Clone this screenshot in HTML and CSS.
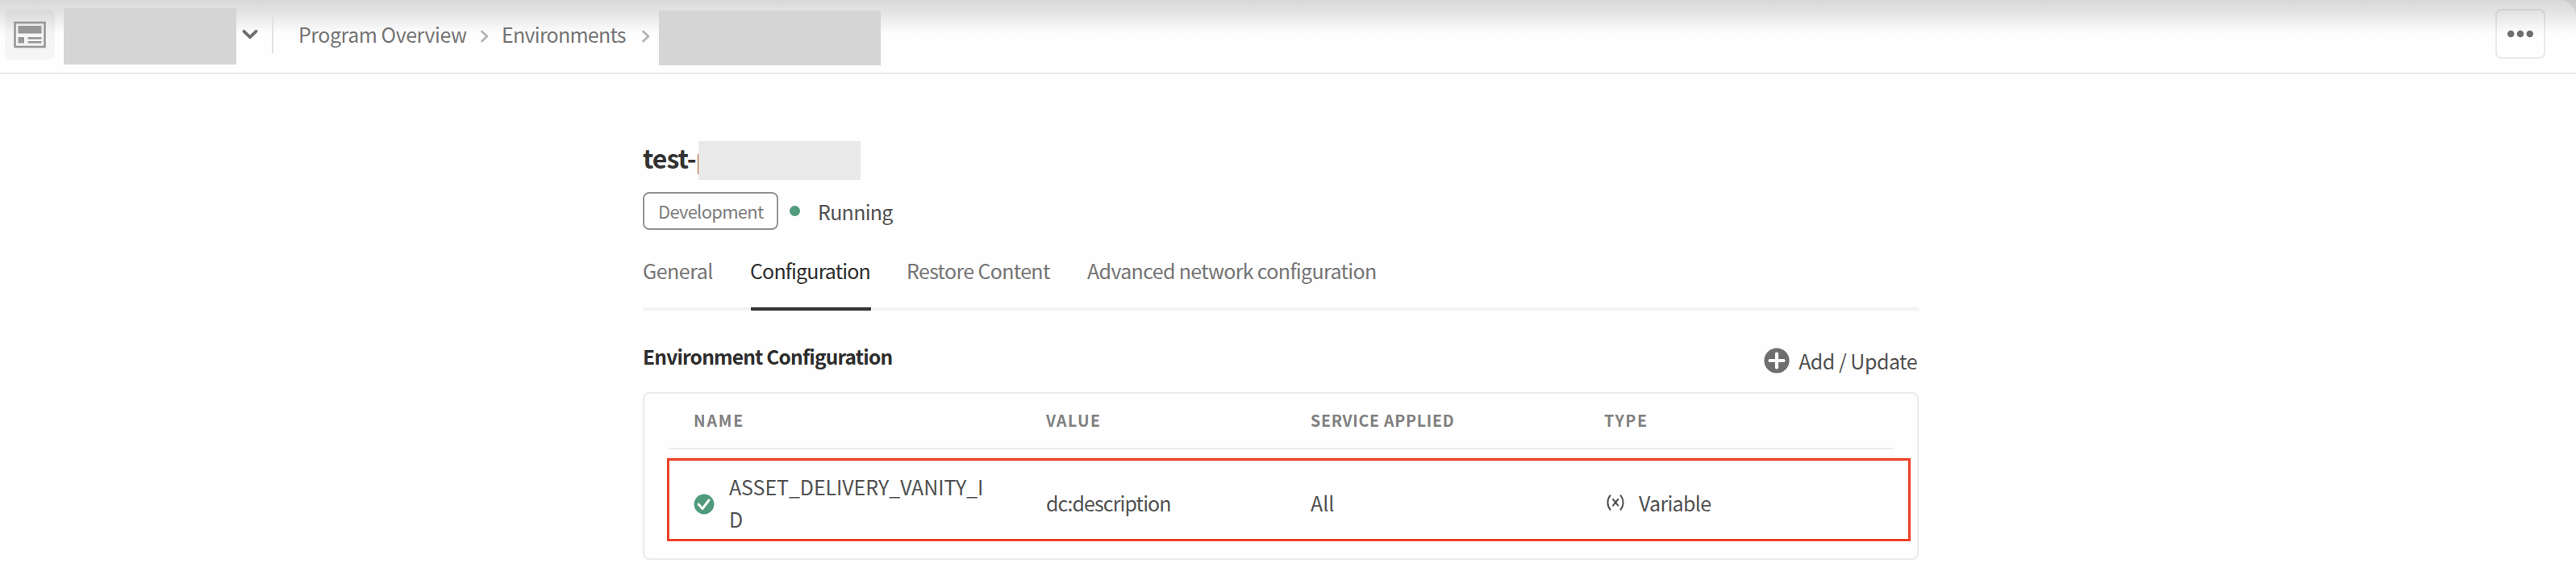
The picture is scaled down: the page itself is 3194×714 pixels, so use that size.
FILE: index.html
```
<!DOCTYPE html>
<html lang="en">
<head>
<meta charset="utf-8">
<title>Environment Configuration</title>
<link rel="stylesheet" href="styles.css">
</head>
<body>
<header class="topbar">
  <div class="app-tile">
    <svg width="40" height="34" viewBox="0 0 40 34">
      <rect x="1.5" y="2" width="37" height="30" fill="none" stroke="#979797" stroke-width="2.6"/>
      <rect x="5.5" y="6" width="29" height="9.5" fill="#979797"/>
      <rect x="5.5" y="20" width="7.5" height="7.5" fill="#979797"/>
      <rect x="17.5" y="20" width="17" height="2.6" fill="#979797"/>
      <rect x="17.5" y="25" width="17" height="2.6" fill="#979797"/>
    </svg>
  </div>
  <div class="mask mask-program"></div>
  <svg class="chevron-down" width="20" height="14" viewBox="0 0 20 14"><path d="M2.5 2.8 L10 10.2 L17.5 2.8" fill="none" stroke="#6e6e6e" stroke-width="3.8" stroke-linecap="round" stroke-linejoin="round"/></svg>
  <div class="divider"></div>
  <nav class="crumbs">
    <a class="crumb crumb-program">Program Overview</a>
    <svg class="sep sep-first" width="12" height="18" viewBox="0 0 12 18"><path d="M3.5 3 L10 9 L3.5 15" fill="none" stroke="#b4b4b4" stroke-width="2.8" stroke-linecap="round" stroke-linejoin="round"/></svg>
    <a class="crumb crumb-env">Environments</a>
    <svg class="sep" width="12" height="18" viewBox="0 0 12 18"><path d="M3.5 3 L10 9 L3.5 15" fill="none" stroke="#b4b4b4" stroke-width="2.8" stroke-linecap="round" stroke-linejoin="round"/></svg>
  </nav>
  <div class="mask mask-env"></div>
  <button class="more" aria-label="More">
    <svg width="34" height="10" viewBox="0 0 34 10" fill="#6e6e6e"><circle cx="5.2" cy="5" r="4.3"/><circle cx="17" cy="5" r="4.3"/><circle cx="28.8" cy="5" r="4.3"/></svg>
  </button>
  <svg class="corner" width="16" height="18" viewBox="0 0 16 18"><path d="M0 0H16V18C13.500 9 8 3 0 0Z" fill="#000" fill-opacity="0.06"/></svg>
</header>
<main class="page">
  <div class="title-row"><h1 class="title">test-p</h1><div class="title-mask"></div></div>
  <div class="status-row">
    <span class="badge"><span class="badge-text">Development</span></span>
    <span class="dot"></span>
    <span class="status">Running</span>
  </div>
  <nav class="tabs">
    <a class="tab tab-general">General</a>
    <a class="tab tab-config active">Configuration</a>
    <a class="tab tab-restore">Restore Content</a>
    <a class="tab tab-network">Advanced network configuration</a>
  </nav>
  <div class="section-head">
    <h2 class="section-title">Environment Configuration</h2>
    <button class="add">
      <svg width="32" height="32" viewBox="0 0 32 32"><circle cx="16" cy="16" r="15.6" fill="#6e6e6e"/><path d="M16 7.5V24.5M7.5 16H24.5" stroke="#fff" stroke-width="4.2" stroke-linecap="round"/></svg>
      <span class="add-text">Add / Update</span>
    </button>
  </div>
  <section class="card">
    <div class="row head">
      <span class="th th-name">NAME</span><span class="th th-value">VALUE</span><span class="th th-service">SERVICE APPLIED</span><span class="th th-type">TYPE</span>
    </div>
    <div class="row item">
      <div class="cell name-cell">
        <svg class="check" width="26" height="26" viewBox="0 0 26 26"><circle cx="13" cy="13" r="12.4" fill="#4f9a7a"/><path d="M6.2 13.2 L11 18.6 L19 8" fill="none" stroke="#fff" stroke-width="3" stroke-linecap="round" stroke-linejoin="round"/></svg>
        <span class="name">ASSET_DELIVERY_VANITY_I<br>D</span>
      </div>
      <div class="cell"><span class="value">dc:description</span></div>
      <div class="cell"><span class="all">All</span></div>
      <div class="cell type-cell">
        <svg class="var-icon" width="22" height="20" viewBox="0 0 22 20" fill="none" stroke="#505050" stroke-width="2" stroke-linecap="round"><path d="M4.500 1.200C.4 6.500 .4 13.500 4.500 18.800M17.500 1.200C21.600 6.500 21.600 13.500 17.500 18.800M8 6L14.200 13.600M14.200 6L8 13.600"/></svg>
        <span class="variable">Variable</span>
      </div>
    </div>
  </section>
</main>
</body>
</html>
```

FILE: styles.css
```
* { box-sizing: border-box; }
body {
  margin: 0;
  height: 714px;
  overflow: hidden;
  background: #fefefe;
  color: #505050;
  font-family: "Noto Sans CJK SC", "Noto Sans", sans-serif;
  font-size: 25px;
  line-height: 40px;
  white-space: nowrap;
}
h1, h2 { margin: 0; font-weight: 700; }
button { padding: 0; border: 0; background: none; color: inherit; font: inherit; }
svg { display: block; flex: none; }

.topbar {
  position: relative;
  display: flex;
  align-items: flex-start;
  height: 92px;
  border-bottom: 2px solid #e8e8e8;
  background: linear-gradient(#d8d8d8, #e6e6e6 18px, #f8f8f8 36px, #fefefe 43px);
}
.corner { position: absolute; top: 0; right: 0; }
.app-tile {
  display: flex;
  align-items: center;
  justify-content: center;
  width: 62px;
  height: 62px;
  margin: 12px 11px 0 6px;
  border-radius: 8px;
  background: rgba(0, 0, 0, 0.035);
}
.mask { background: #d5d5d5; }
.mask-program { width: 214px; height: 70px; margin-top: 10px; }
.chevron-down { margin: 36px 0 0 7px; }
.divider { width: 2px; height: 47px; margin: 19px 31px 0 17px; background: #e1e1e1; }
.crumbs { display: flex; align-items: center; margin-top: 22px; color: #747474; }
.crumb-program { width: 224px; letter-spacing: -0.47px; }
.crumb-env { width: 156px; letter-spacing: -0.75px; }
.sep { margin: 6px 11px 0 16px; }
.sep-first { margin: 6px 16px 0 0; }
.mask-env { width: 275px; height: 68px; margin-top: 13px; }
.more {
  display: flex;
  align-items: center;
  justify-content: center;
  width: 62px;
  height: 62px;
  margin: 11px 38px 0 auto;
  border: 2px solid rgba(0, 0, 0, 0.08);
  border-radius: 8px;
}

.page { width: 1582px; margin-left: 797px; padding-top: 83px; }
.title-row { display: flex; height: 62px; }
.title { width: 69px; margin-top: -4px; font-size: 32px; line-height: 48px; letter-spacing: -1px; color: #323232; }
.title-mask { z-index: 1; width: 201px; height: 48px; background: #e9e9e9; }
.status-row { display: flex; align-items: center; height: 48px; }
.badge {
  width: 168px;
  height: 47px;
  padding-left: 17px;
  border: 2px solid #929292;
  border-radius: 8px;
  font-size: 22px;
  line-height: 42px;
  letter-spacing: -0.72px;
  color: #7c7c7c;
}
.dot { width: 13px; height: 13px; margin: 0 22px 0 14px; border-radius: 50%; background: #4f9a7a; }
.status { padding-top: 2px; letter-spacing: -0.72px; }
.tabs { display: flex; height: 100px; padding-top: 30px; border-bottom: 4px solid #f3f3f3; color: #747474; }
.tab { height: 70px; line-height: 41px; }
.tab-general { width: 134px; letter-spacing: -0.5px; }
.tab-config { width: 149px; margin-right: 44px; text-indent: -1px; letter-spacing: -0.85px; }
.tab-restore { width: 224px; letter-spacing: -0.66px; }
.tab-network { letter-spacing: -0.66px; }
.active { border-bottom: 4px solid #323232; border-radius: 1px; color: #2c2c2c; }
.section-head { display: flex; justify-content: space-between; height: 101px; padding-top: 36px; }
.section-title { padding-top: 1px; font-size: 24.5px; letter-spacing: -0.82px; color: #2c2c2c; }
.add { display: flex; align-items: center; gap: 11px; height: 40px; margin: 6px 2px 0 0; }
.add-text { padding-bottom: 1px; letter-spacing: -0.5px; }
.card { height: 208px; padding: 0 8px 0 28px; border: 2px solid #ebebeb; border-radius: 8px; }
.row { display: grid; grid-template-columns: 436px 328px 364px 1fr; }
.head { height: 69px; margin: 0 22px 0 2px; padding: 13px 0 0 32px; border-bottom: 2px solid #ebebeb; font-size: 19.5px; font-weight: 700; color: #808080; }
.th-name { text-indent: -1px; letter-spacing: 1.8px; }
.th-value { letter-spacing: 1.4px; }
.th-service { letter-spacing: 0.75px; }
.th-type { letter-spacing: 1.6px; }
.item { height: 103px; margin-top: 11px; padding: 6px 0 0 30px; border: 3px solid #ec4128; align-items: center; }
.cell { display: flex; align-items: center; }
.name-cell { gap: 18px; }
.name { letter-spacing: -0.08px; }
.check { margin-top: 4px; }
.value { padding-left: 1px; letter-spacing: -0.9px; }
.all { padding-left: 1px; }
.type-cell { padding-left: 4px; gap: 18px; }
.variable { letter-spacing: -0.7px; }
```
